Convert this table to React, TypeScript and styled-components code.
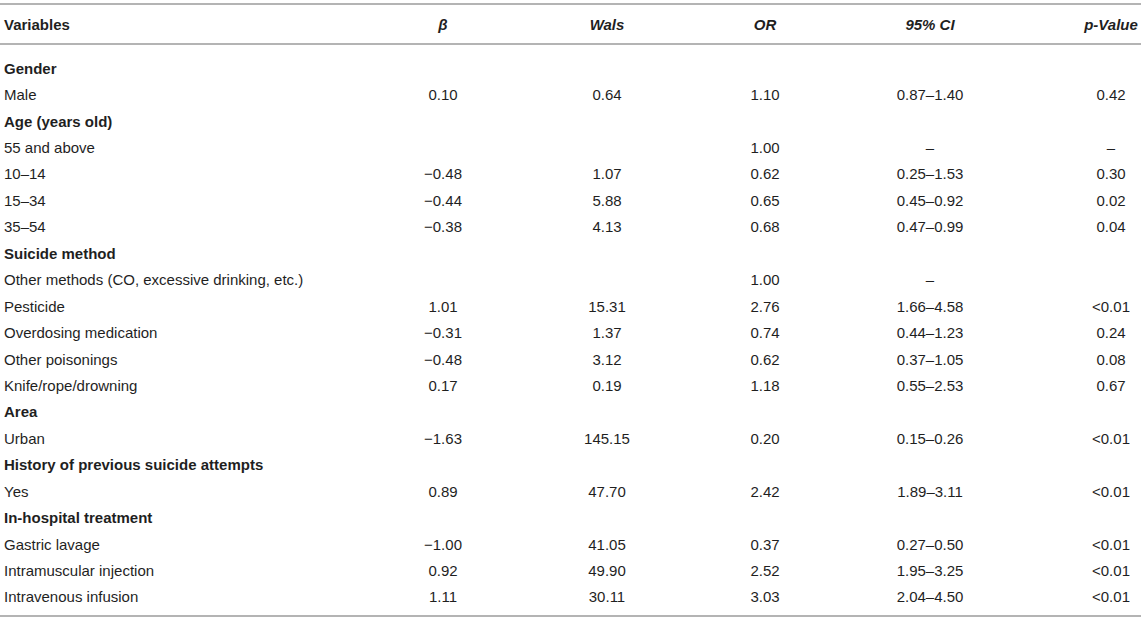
import styled, { createGlobalStyle } from "styled-components";

// Global page reset
const GlobalStyle = createGlobalStyle`
  html, body {
    margin: 0;
    padding: 0;
    background: #ffffff;
  }
  body {
    font-family: "Liberation Sans", Arial, Helvetica, sans-serif;
    color: #1f1f1f;
  }
`;

type Row = {
  label: string;
  group?: boolean;
  values?: [string, string, string, string, string];
};

const MINUS = "\u2212";
const DASH = "\u2013";

const rows: Row[] = [
  { label: "Gender", group: true },
  { label: "Male", values: ["0.10", "0.64", "1.10", `0.87${DASH}1.40`, "0.42"] },
  { label: "Age (years old)", group: true },
  { label: "55 and above", values: ["", "", "1.00", DASH, DASH] },
  { label: `10${DASH}14`, values: [`${MINUS}0.48`, "1.07", "0.62", `0.25${DASH}1.53`, "0.30"] },
  { label: `15${DASH}34`, values: [`${MINUS}0.44`, "5.88", "0.65", `0.45${DASH}0.92`, "0.02"] },
  { label: `35${DASH}54`, values: [`${MINUS}0.38`, "4.13", "0.68", `0.47${DASH}0.99`, "0.04"] },
  { label: "Suicide method", group: true },
  { label: "Other methods (CO, excessive drinking, etc.)", values: ["", "", "1.00", DASH, ""] },
  { label: "Pesticide", values: ["1.01", "15.31", "2.76", `1.66${DASH}4.58`, "<0.01"] },
  { label: "Overdosing medication", values: [`${MINUS}0.31`, "1.37", "0.74", `0.44${DASH}1.23`, "0.24"] },
  { label: "Other poisonings", values: [`${MINUS}0.48`, "3.12", "0.62", `0.37${DASH}1.05`, "0.08"] },
  { label: "Knife/rope/drowning", values: ["0.17", "0.19", "1.18", `0.55${DASH}2.53`, "0.67"] },
  { label: "Area", group: true },
  { label: "Urban", values: [`${MINUS}1.63`, "145.15", "0.20", `0.15${DASH}0.26`, "<0.01"] },
  { label: "History of previous suicide attempts", group: true },
  { label: "Yes", values: ["0.89", "47.70", "2.42", `1.89${DASH}3.11`, "<0.01"] },
  { label: "In-hospital treatment", group: true },
  { label: "Gastric lavage", values: [`${MINUS}1.00`, "41.05", "0.37", `0.27${DASH}0.50`, "<0.01"] },
  { label: "Intramuscular injection", values: ["0.92", "49.90", "2.52", `1.95${DASH}3.25`, "<0.01"] },
  { label: "Intravenous infusion", values: ["1.11", "30.11", "3.03", `2.04${DASH}4.50`, "<0.01"] },
];

const headers = ["\u03b2", "Wals", "OR", "95% CI", "p-Value"];

// Layout
const Page = styled.div`
  width: 1141px;
  padding-top: 3px;
`;

const Grid = styled.div`
  display: grid;
  grid-template-columns: 360px 166px 162px 154px 176px 123px;
`;

const Head = styled(Grid)`
  height: 38px;
  align-items: center;
  border-top: 2px solid #b4b4b4;
  border-bottom: 2px solid #b4b4b4;
  font-weight: bold;
  font-size: 15px;
`;

const Body = styled.div`
  padding: 10px 0 5px;
  border-bottom: 2px solid #b4b4b4;
`;

const BodyRow = styled(Grid)`
  height: 26.45px;
  align-items: center;
  font-size: 15px;
`;

const LabelCell = styled.div<{ $bold?: boolean }>`
  padding-left: 4px;
  white-space: nowrap;
  font-weight: ${({ $bold }) => ($bold ? "bold" : "normal")};
`;

const Cell = styled.div<{ $last?: boolean; $italic?: boolean }>`
  text-align: center;
  white-space: nowrap;
  padding-left: ${({ $last }) => ($last ? "63px" : "0")};
  font-style: ${({ $italic }) => ($italic ? "italic" : "normal")};
`;

export default function App() {
  return (
    <>
      <GlobalStyle />
      <Page>
        <Head>
          <LabelCell $bold>Variables</LabelCell>
          {headers.map((h, i) => (
            <Cell key={h} $italic $last={i === headers.length - 1}>
              {h}
            </Cell>
          ))}
        </Head>
        <Body>
          {rows.map((r) => (
            <BodyRow key={r.label}>
              <LabelCell $bold={r.group}>{r.label}</LabelCell>
              {(r.values ?? ["", "", "", "", ""]).map((v, i) => (
                <Cell key={i} $last={i === 4}>
                  {v}
                </Cell>
              ))}
            </BodyRow>
          ))}
        </Body>
      </Page>
    </>
  );
}
